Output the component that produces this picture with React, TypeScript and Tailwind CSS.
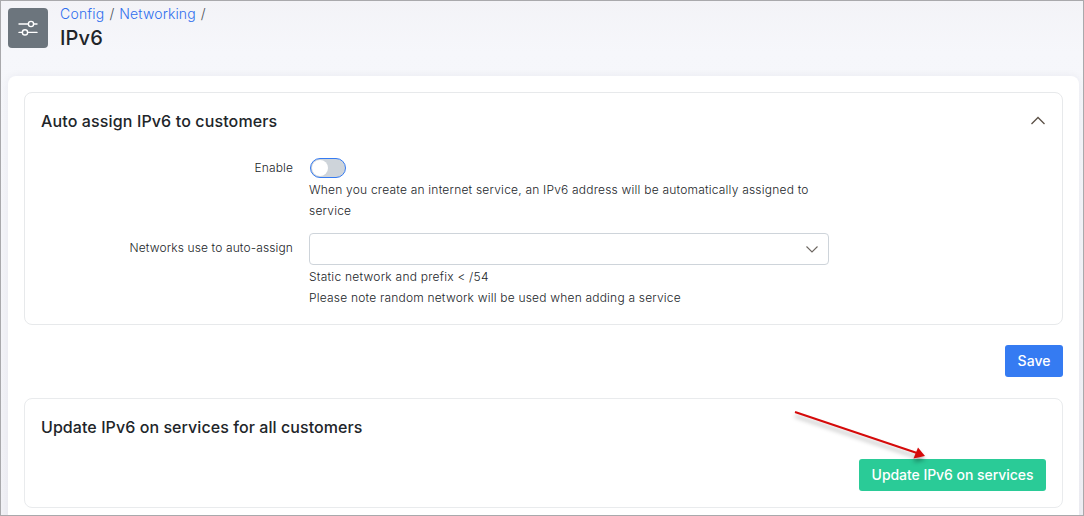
import React from "react";

function SlidersIcon() {
  return (
    <svg width="20" height="20" viewBox="0 0 20 20" fill="none" stroke="#fff" strokeWidth="1.4" strokeLinecap="round">
      <path d="M1 6H10.2M15.8 6H19M1 14.4H4.2M9.8 14.4H19" />
      <circle cx="13" cy="6" r="2.6" />
      <circle cx="7" cy="14.4" r="2.6" />
    </svg>
  );
}

function Header() {
  return (
    <header className="flex h-[75px] items-start pl-[7px] pt-[7px]">
      <div className="flex h-10 w-10 items-center justify-center rounded bg-[#6c757d]">
        <SlidersIcon />
      </div>
      <div className="-mt-[5px] ml-3">
        <nav className="flex h-[22px] items-center whitespace-pre text-[14px] font-light leading-[22px] text-[#495057]">
          <a className="tracking-[0.2px] text-[#2f6fee]">Config</a>
          <span className="px-[5px]">/</span>
          <a className="tracking-[0.13px] text-[#2f6fee]">Networking</a>
          <span className="px-[5px]">/</span>
        </nav>
        <h1 className="text-[20px] font-medium leading-[26px] tracking-[0.15px] text-[#212529]">IPv6</h1>
      </div>
    </header>
  );
}

export default function App() {
  return (
    <div className="relative h-[516px] w-[1084px] overflow-hidden border border-[#a9a9ac] bg-gradient-to-b from-[#f3f3f7] via-[#f6f7fb] via-10% to-[#f1f1f6] font-['Inter',sans-serif] text-[#212529]">
      <Header />
      <main className="ml-[7px] h-[460px] w-[1071px] rounded-t-lg bg-white px-4 pt-4 shadow-[0_0_8px_rgba(40,40,70,0.06)]">
        <section className="h-[233px] rounded-lg border border-[#e7e9eb] px-4">
          <div className="flex h-[55px] items-center justify-between">
            <h2 className="text-[16px] font-medium tracking-[0.13px]">Auto assign IPv6 to customers</h2>
            <svg width="15" height="9" viewBox="0 0 15 9" fill="none" stroke="#5c5147" strokeWidth="1.3">
              <path d="M0.5 8L7 1.5L13.5 8" />
            </svg>
          </div>
          <div className="mt-0.5 flex text-[12px] font-light leading-[21px] tracking-[0.21px] text-[#212529]">
            <label className="mt-[7px] w-[252px] text-right tracking-[0.12px]">Enable</label>
            <div className="ml-4 mt-2 w-[520px]">
              <div className="ml-px flex h-5 w-9 items-center rounded-full border border-[#357bf2] bg-[#ced4da] pl-px">
                <span className="h-4 w-4 rounded-full bg-white" />
              </div>
              <p className="mt-px">When you create an internet service, an IPv6 address will be automatically assigned to service</p>
            </div>
          </div>
          <div className="mt-3 flex text-[12px] font-light leading-[21px] tracking-[0.2px] text-[#212529]">
            <label className="mt-1 w-[252px] text-right tracking-[0.12px]">Networks use to auto-assign</label>
            <div className="ml-4 w-[520px]">
              <div className="flex h-8 items-center justify-end rounded border border-[#ced4da] pr-[9px]">
                <svg width="14" height="8" viewBox="0 0 14 8" fill="none" stroke="#6c6660" strokeWidth="1.1">
                  <path d="M1.5 1.5L7 7L12.5 1.5" />
                </svg>
              </div>
              <p className="mt-px tracking-[0.24px]">Static network and prefix &lt; /54</p>
              <p>Please note random network will be used when adding a service</p>
            </div>
          </div>
        </section>
        <div className="mt-5 flex justify-end">
          <button className="h-8 w-[58px] rounded-[3px] bg-[#357bf2] pb-0.5 text-[14px] font-medium text-white">Save</button>
        </div>
        <section className="mt-[21px] flex h-[110px] flex-col rounded-lg border border-[#e9ebed] px-4">
          <h2 className="flex h-[55px] items-center text-[16px] font-medium tracking-[0.07px]">Update IPv6 on services for all customers</h2>
          <button className="mt-[5px] h-8 w-[187px] self-end rounded-[3px] bg-[#2acb97] pb-0.5 text-[14px] font-medium tracking-[-0.05px] text-white">Update IPv6 on services</button>
        </section>
      </main>
      <svg className="pointer-events-none absolute left-[789px] top-[404px]" width="150" height="66" viewBox="790 405 150 66">
        <g style={{ filter: "drop-shadow(0px 4px 2px rgba(0,0,0,0.3))" }}>
          <path d="M795 412L917 453" stroke="#d50a0a" strokeWidth="2" />
          <path d="M918 447.5L925 456L913.5 458.5Z" fill="#d50a0a" />
        </g>
      </svg>
    </div>
  );
}
